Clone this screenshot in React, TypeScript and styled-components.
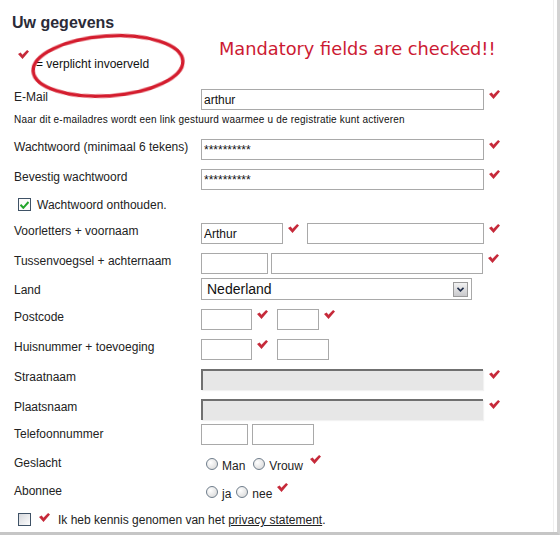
import React from "react";
import styled, { createGlobalStyle } from "styled-components";

const GlobalStyle = createGlobalStyle`
  html, body { margin: 0; padding: 0; background: #fff; }
  body { font-family: "Liberation Sans", Arial, sans-serif; color: #222; }
`;

const Frame = styled.div`
  position: relative;
  width: 560px;
  height: 535px;
  box-sizing: border-box;
  border-right: 3px solid #d2d2d2;
  border-bottom: 3px solid #c6c6c6;
  overflow: hidden;
`;

const Panel = styled.div`
  width: 554px;
  height: 100%;
  box-sizing: border-box;
  border-right: 1px solid #efefef;
`;

const Header = styled.div`
  height: 89px;
  box-sizing: border-box;
  padding: 13px 0 0 12px;
`;

const Title = styled.h2`
  margin: 0;
  font: bold 16px/20px "Liberation Sans", Arial, sans-serif;
  color: #2b2b38;
`;

const LegendRow = styled.div`
  display: flex;
  align-items: flex-start;
`;

const Legend = styled.div`
  display: flex;
  align-items: flex-start;
  width: 207px;
  padding-left: 6px;
  box-sizing: border-box;
`;

const LegendText = styled.span`
  margin-top: 24px;
  margin-left: -1px;
  font-size: 12px;
  line-height: 14px;
  color: #111;
`;

const Mandatory = styled.div`
  margin-top: 5px;
  font: 17.8px/21px "DejaVu Sans", Verdana, sans-serif;
  color: #cc1a33;
`;

const Ring = styled.svg`
  position: absolute;
  left: 26px;
  top: 29px;
  pointer-events: none;
`;

const Row = styled.div<{ $h: number }>`
  display: flex;
  align-items: flex-start;
  height: ${(p) => p.$h}px;
`;

const Label = styled.div<{ $pt?: number }>`
  width: 201px;
  flex: none;
  padding: ${(p) => p.$pt ?? 0}px 0 0 14px;
  box-sizing: border-box;
  font-size: 12px;
  line-height: 16px;
  color: #222;
`;

const Fields = styled.div<{ $pt?: number; $pl?: number }>`
  display: flex;
  align-items: flex-start;
  padding: ${(p) => p.$pt ?? 0}px 0 0 ${(p) => p.$pl ?? 0}px;
`;

const Input = styled.input<{ $w: number; $ml?: number }>`
  width: ${(p) => p.$w}px;
  height: 21px;
  margin: 0 0 0 ${(p) => p.$ml ?? 0}px;
  padding: 0 2px;
  box-sizing: border-box;
  border: 1px solid #a9a9a9;
  background: #fff;
  font: 12px "Liberation Sans", Arial, sans-serif;
  color: #111;
  outline: none;
`;

const LockedInput = styled.div`
  width: 282px;
  height: 21px;
  box-sizing: border-box;
  border-top: 2px solid #707070;
  border-left: 2px solid #707070;
  background: #e7e7e7;
  box-shadow: 1px 1px 1px #f2f2f2;
`;

const Note = styled.div`
  padding: 1px 0 0 14px;
  font-size: 10px;
  line-height: 12px;
  letter-spacing: 0.2px;
  color: #111;
`;

const Check = styled.span<{ $mt?: number; $ml?: number }>`
  display: inline-flex;
  flex: none;
  margin: ${(p) => p.$mt ?? 1}px 8px 0 ${(p) => p.$ml ?? 5}px;
`;

const Tick = ({ mt, ml }: { mt?: number; ml?: number }) => (
  <Check $mt={mt} $ml={ml}>
    <svg width="11" height="9" viewBox="0 0 11 9">
      <path d="M0 4.1 L2.7 2.5 L4.4 4.7 L9.1 0 L11 1.6 L4.5 8.9 Z" fill="#c62a3a" />
    </svg>
  </Check>
);

const BoxRow = styled.div<{ $h: number; $pt: number }>`
  display: flex;
  align-items: flex-start;
  height: ${(p) => p.$h}px;
  box-sizing: border-box;
  padding: ${(p) => p.$pt}px 0 0 18px;
  font-size: 12px;
  line-height: 16px;
`;

const Box = styled.span<{ $checked?: boolean }>`
  display: inline-flex;
  align-items: center;
  justify-content: center;
  flex: none;
  width: 13px;
  height: 13px;
  margin-top: 1px;
  box-sizing: border-box;
  border: 1px solid #3f5266;
  background: ${(p) => (p.$checked ? "#fbfbfb" : "linear-gradient(135deg, #d6d8dc, #fdfdfd)")};
`;

const BoxText = styled.span<{ $ml: number }>`
  margin-left: ${(p) => p.$ml}px;
`;

const Link = styled.a`
  color: #222;
  text-decoration: underline;
`;

const Select = styled.div`
  display: flex;
  align-items: center;
  justify-content: space-between;
  width: 271px;
  height: 22px;
  box-sizing: border-box;
  border: 1px solid #a9a9a9;
  padding: 0 3px 0 5px;
  font-size: 14px;
  color: #111;
`;

const DropButton = styled.span`
  display: inline-flex;
  align-items: center;
  justify-content: center;
  width: 15px;
  height: 15px;
  box-sizing: border-box;
  border: 1px solid #9a9a9a;
  background: linear-gradient(#f2f2f2, #c9c9cc);
`;

const Radio = styled.span`
  flex: none;
  width: 12px;
  height: 12px;
  box-sizing: border-box;
  border-radius: 50%;
  border: 1px solid #6f7d8b;
  background: radial-gradient(circle at 35% 35%, #ffffff, #d4d4d4);
`;

const RadioOption = styled.label<{ $mr?: number }>`
  display: inline-flex;
  align-items: flex-start;
  margin-right: ${(p) => p.$mr ?? 0}px;
  font-size: 12px;
  line-height: 14px;
`;

const RadioText = styled.span`
  margin-left: 4px;
  padding-top: 1px;
`;

export default function App() {
  return (
    <Frame>
      <GlobalStyle />
      <Panel>
        <Header>
          <Title>Uw gegevens</Title>
          <LegendRow>
            <Legend>
              <Tick mt={17} ml={0} />
              <LegendText>= verplicht invoerveld</LegendText>
            </Legend>
            <Mandatory>Mandatory fields are checked!!</Mandatory>
          </LegendRow>
        </Header>

        <Row $h={24}>
          <Label>E-Mail</Label>
          <Fields>
            <Input $w={283} defaultValue="arthur" />
            <Tick />
          </Fields>
        </Row>
        <Row $h={26}>
          <Note>Naar dit e-mailadres wordt een link gestuurd waarmee u de registratie kunt activeren</Note>
        </Row>
        <Row $h={30}>
          <Label>Wachtwoord (minimaal 6 tekens)</Label>
          <Fields>
            <Input $w={283} defaultValue="**********" />
            <Tick />
          </Fields>
        </Row>
        <Row $h={26}>
          <Label>Bevestig wachtwoord</Label>
          <Fields>
            <Input $w={283} defaultValue="**********" />
            <Tick />
          </Fields>
        </Row>
        <BoxRow $h={28} $pt={2}>
          <Box $checked>
            <svg width="9" height="8" viewBox="0 0 9 8">
              <path d="M0.5 3.8 L3.3 6.8 L8.5 1" stroke="#22a52a" strokeWidth="2" fill="none" />
            </svg>
          </Box>
          <BoxText $ml={6}>Wachtwoord onthouden.</BoxText>
        </BoxRow>
        <Row $h={30}>
          <Label>Voorletters + voornaam</Label>
          <Fields>
            <Input $w={82} defaultValue="Arthur" />
            <Tick />
            <Input $w={177} />
            <Tick />
          </Fields>
        </Row>
        <Row $h={25}>
          <Label>Tussenvoegsel + achternaam</Label>
          <Fields>
            <Input $w={67} />
            <Input $w={212} $ml={3} />
            <Tick />
          </Fields>
        </Row>
        <Row $h={31}>
          <Label $pt={4}>Land</Label>
          <Fields>
            <Select>
              <span>Nederland</span>
              <DropButton>
                <svg width="7" height="5" viewBox="0 0 7 5">
                  <path d="M0.5 0.8 L3.5 3.8 L6.5 0.8" stroke="#1f2d4a" strokeWidth="1.6" fill="none" />
                </svg>
              </DropButton>
            </Select>
          </Fields>
        </Row>
        <Row $h={30}>
          <Label>Postcode</Label>
          <Fields>
            <Input $w={51} />
            <Tick />
            <Input $w={42} $ml={1} />
            <Tick />
          </Fields>
        </Row>
        <Row $h={30}>
          <Label>Huisnummer + toevoeging</Label>
          <Fields>
            <Input $w={51} />
            <Tick />
            <Input $w={52} $ml={1} />
          </Fields>
        </Row>
        <Row $h={30}>
          <Label>Straatnaam</Label>
          <Fields>
            <LockedInput />
            <Tick ml={6} />
          </Fields>
        </Row>
        <Row $h={25}>
          <Label>Plaatsnaam</Label>
          <Fields>
            <LockedInput />
            <Tick ml={6} />
          </Fields>
        </Row>
        <Row $h={31}>
          <Label $pt={2}>Telefoonnummer</Label>
          <Fields>
            <Input $w={47} />
            <Input $w={62} $ml={4} />
          </Fields>
        </Row>
        <Row $h={28}>
          <Label>Geslacht</Label>
          <Fields $pt={3} $pl={5}>
            <RadioOption $mr={8}>
              <Radio />
              <RadioText>Man</RadioText>
            </RadioOption>
            <RadioOption>
              <Radio />
              <RadioText>Vrouw</RadioText>
            </RadioOption>
            <Tick mt={-3} ml={7} />
          </Fields>
        </Row>
        <Row $h={27}>
          <Label>Abonnee</Label>
          <Fields $pt={3} $pl={5}>
            <RadioOption $mr={5}>
              <Radio />
              <RadioText>ja</RadioText>
            </RadioOption>
            <RadioOption>
              <Radio />
              <RadioText>nee</RadioText>
            </RadioOption>
            <Tick mt={-3} ml={5} />
          </Fields>
        </Row>
        <BoxRow $h={22} $pt={2}>
          <Box />
          <Tick mt={1} ml={8} />
          <BoxText $ml={0}>
            Ik heb kennis genomen van het <Link>privacy statement</Link>.
          </BoxText>
        </BoxRow>
      </Panel>
      <Ring width="166" height="80" viewBox="0 0 166 80">
        <defs>
          <filter id="soft" x="-10%" y="-10%" width="120%" height="120%">
            <feGaussianBlur stdDeviation="0.7" />
          </filter>
        </defs>
        <ellipse
          cx="82"
          cy="37"
          rx="75"
          ry="30"
          transform="rotate(-4 82 37)"
          fill="none"
          stroke="#d41f2e"
          strokeWidth="3.5"
          filter="url(#soft)"
        />
      </Ring>
    </Frame>
  );
}
